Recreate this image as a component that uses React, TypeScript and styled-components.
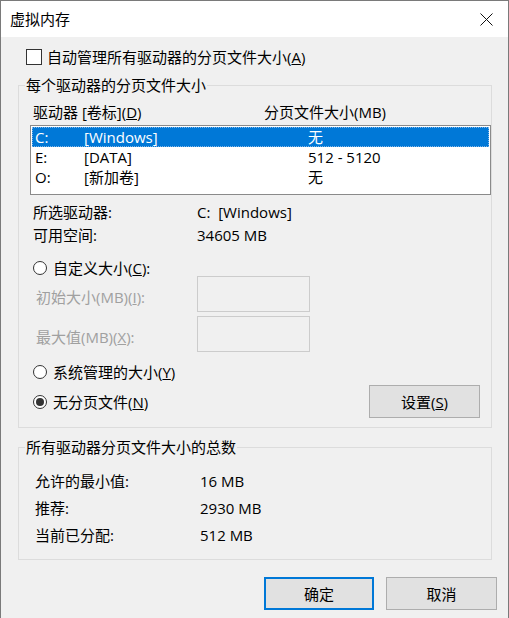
import React from "react";
import styled, { createGlobalStyle } from "styled-components";

const Global = createGlobalStyle`
  html, body { margin: 0; padding: 0; background: #ffffff; }
  * { box-sizing: border-box; }
`;

const FONT = `"Open Sans", "Noto Sans CJK SC", sans-serif`;

const Window = styled.div`
  width: 509px;
  height: 618px;
  border: 1px solid #7a7a7a;
  border-bottom: none;
  background: #f0f0f0;
  display: flex;
  flex-direction: column;
  font-family: ${FONT};
  font-size: 15px;
  color: #000;
  overflow: hidden;
`;

const TitleBar = styled.div`
  height: 36px;
  background: #ffffff;
  display: flex;
  align-items: center;
  justify-content: space-between;
  padding: 0 15px 0 9px;
  flex-shrink: 0;
`;

const Title = styled.span`
  line-height: 20px;
`;

const CloseIcon = () => (
  <svg width="13" height="13" viewBox="0 0 13 13">
    <path d="M0.5 0.5 L12.5 12.5 M12.5 0.5 L0.5 12.5" stroke="#111" strokeWidth="1" fill="none" />
  </svg>
);

const Body = styled.div`
  padding: 0 16px 0 17px;
  display: flex;
  flex-direction: column;
`;

const CheckRow = styled.label`
  height: 20px;
  margin-top: 10px;
  padding-left: 8px;
  display: flex;
  align-items: center;
  gap: 5px;
  line-height: 20px;
`;

const CheckBox = styled.span`
  width: 16px;
  height: 16px;
  border: 1px solid #333;
  background: #fff;
  flex-shrink: 0;
`;

const Group = styled.fieldset<{ $top: number; $pt: number; $pb: number }>`
  margin: ${(p) => p.$top}px 0 0 0;
  padding: ${(p) => p.$pt}px 0 ${(p) => p.$pb}px 6px;
  border: 1px solid #dcdcdc;
  min-inline-size: 0;
`;

const Legend = styled.legend`
  padding: 0 1px;
  margin: 0;
  line-height: 20px;
  height: 20px;
`;

const Inner = styled.div<{ $pl: number }>`
  padding-left: ${(p) => p.$pl}px;
  display: flex;
  flex-direction: column;
`;

const HeaderRow = styled.div`
  display: grid;
  grid-template-columns: 231px 1fr;
  padding-left: 3px;
  line-height: 20px;
  height: 20px;
`;

const ListBox = styled.div`
  margin-top: 3px;
  height: 70px;
  border: 1px solid #8a8a8a;
  background: #fff;
  padding: 1px 1px 0 1px;
`;

const ListRow = styled.div<{ $selected?: boolean }>`
  display: grid;
  grid-template-columns: 49px 224px 1fr;
  height: 20px;
  line-height: 18px;
  padding-left: 2px;
  background: ${(p) => (p.$selected ? "#0078d7" : "transparent")};
  color: ${(p) => (p.$selected ? "#fff" : "#000")};
  border: 1px dotted ${(p) => (p.$selected ? "#7fb6e8" : "transparent")};
`;

const InfoRow = styled.div<{ $first?: boolean }>`
  display: grid;
  grid-template-columns: 164px 1fr;
  padding-left: 3px;
  height: 23px;
  line-height: 23px;
  margin-top: ${(p) => (p.$first ? 6 : 0)}px;
`;

const RadioRow = styled.label<{ $mt: number }>`
  display: flex;
  align-items: center;
  gap: 6px;
  height: 20px;
  line-height: 20px;
  padding-left: 3px;
  margin-top: ${(p) => p.$mt}px;
`;

const RadioCircle = styled.span<{ $checked?: boolean }>`
  width: 14px;
  height: 14px;
  border-radius: 50%;
  border: 1px solid #333;
  background: #fff;
  flex-shrink: 0;
  display: flex;
  align-items: center;
  justify-content: center;
  &::after {
    content: "";
    width: 8px;
    height: 8px;
    border-radius: 50%;
    background: ${(p) => (p.$checked ? "#333" : "transparent")};
  }
`;

const FieldRow = styled.div<{ $mt: number }>`
  display: flex;
  align-items: center;
  padding-left: 6px;
  margin-top: ${(p) => p.$mt}px;
  height: 36px;
`;

const FieldLabel = styled.span`
  width: 161px;
  color: #a0a0a0;
  line-height: 20px;
  padding-top: 6px;
`;

const DisabledInput = styled.div`
  width: 113px;
  height: 36px;
  border: 1px solid #cccccc;
  background: #f0f0f0;
`;

const ActionRow = styled.div`
  display: flex;
  align-items: center;
  justify-content: space-between;
  margin-top: 3px;
  padding-right: 11px;
`;

const Button = styled.button<{ $primary?: boolean; $w: number }>`
  width: ${(p) => p.$w}px;
  height: 33px;
  font-family: ${FONT};
  font-size: 15px;
  color: #000;
  background: #e1e1e1;
  border: ${(p) => (p.$primary ? "2px solid #0078d7" : "1px solid #adadad")};
  padding: 0;
  margin: 0;
`;

const TotalRow = styled.div`
  display: grid;
  grid-template-columns: 165px 1fr;
  height: 27px;
  line-height: 27px;
`;

const Footer = styled.div`
  display: flex;
  justify-content: flex-end;
  gap: 12px;
  padding-right: 11px;
  margin-top: 17px;
`;

export default function App() {
  return (
    <>
      <Global />
      <Window>
        <TitleBar>
          <Title>虚拟内存</Title>
          <CloseIcon />
        </TitleBar>
        <Body>
          <CheckRow>
            <CheckBox />
            <span>
              自动管理所有驱动器的分页文件大小(<u>A</u>)
            </span>
          </CheckRow>

          <Group $top={8} $pt={7} $pb={9}>
            <Legend>每个驱动器的分页文件大小</Legend>
            <Inner $pl={5}>
              <HeaderRow>
                <span>
                  驱动器 [卷标](<u>D</u>)
                </span>
                <span>分页文件大小(MB)</span>
              </HeaderRow>
              <ListBox>
                <ListRow $selected>
                  <span>C:</span>
                  <span>[Windows]</span>
                  <span>无</span>
                </ListRow>
                <ListRow>
                  <span>E:</span>
                  <span>[DATA]</span>
                  <span>512 - 5120</span>
                </ListRow>
                <ListRow>
                  <span>O:</span>
                  <span>[新加卷]</span>
                  <span>无</span>
                </ListRow>
              </ListBox>
              <InfoRow $first>
                <span>所选驱动器:</span>
                <span>C:&nbsp;&nbsp;[Windows]</span>
              </InfoRow>
              <InfoRow>
                <span>可用空间:</span>
                <span>34605 MB</span>
              </InfoRow>
              <RadioRow $mt={11}>
                <RadioCircle />
                <span>
                  自定义大小(<u>C</u>):
                </span>
              </RadioRow>
              <FieldRow $mt={-2}>
                <FieldLabel>
                  初始大小(MB)(<u>I</u>):
                </FieldLabel>
                <DisabledInput />
              </FieldRow>
              <FieldRow $mt={4}>
                <FieldLabel>
                  最大值(MB)(<u>X</u>):
                </FieldLabel>
                <DisabledInput />
              </FieldRow>
              <RadioRow $mt={10}>
                <RadioCircle />
                <span>
                  系统管理的大小(<u>Y</u>)
                </span>
              </RadioRow>
              <ActionRow>
                <RadioRow $mt={0}>
                  <RadioCircle $checked />
                  <span>
                    无分页文件(<u>N</u>)
                  </span>
                </RadioRow>
                <Button $w={111}>
                  设置(<u>S</u>)
                </Button>
              </ActionRow>
            </Inner>
          </Group>

          <Group $top={9} $pt={11} $pb={10}>
            <Legend>所有驱动器分页文件大小的总数</Legend>
            <Inner $pl={10}>
              <TotalRow>
                <span>允许的最小值:</span>
                <span>16 MB</span>
              </TotalRow>
              <TotalRow>
                <span>推荐:</span>
                <span>2930 MB</span>
              </TotalRow>
              <TotalRow>
                <span>当前已分配:</span>
                <span>512 MB</span>
              </TotalRow>
            </Inner>
          </Group>
        </Body>
        <Footer>
          <Button $primary $w={110}>
            确定
          </Button>
          <Button $w={111}>取消</Button>
        </Footer>
      </Window>
    </>
  );
}
